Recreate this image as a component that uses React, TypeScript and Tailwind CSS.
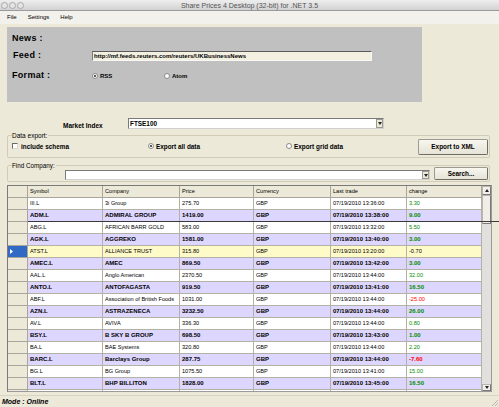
import React from 'react'

type Row = {
    sym: string
    co: string
    price: string
    time: string
    ch: string
    bold?: boolean
    sel?: boolean
}

const rows: Row[] = [
    { sym: 'III.L', co: '3i Group', price: '275.70', time: '07/19/2010 13:36:00', ch: '3.30' },
    { sym: 'ADM.L', co: 'ADMIRAL GROUP', price: '1419.00', time: '07/19/2010 13:38:00', ch: '9.00', bold: true },
    { sym: 'ABG.L', co: 'AFRICAN BARR GOLD', price: '583.00', time: '07/19/2010 13:32:00', ch: '5.50' },
    { sym: 'AGK.L', co: 'AGGREKO', price: '1581.00', time: '07/19/2010 13:40:00', ch: '3.00', bold: true },
    { sym: 'ATST.L', co: 'ALLIANCE TRUST', price: '315.80', time: '07/19/2010 13:20:00', ch: '-0.70', sel: true },
    { sym: 'AMEC.L', co: 'AMEC', price: '869.50', time: '07/19/2010 13:42:00', ch: '3.00', bold: true },
    { sym: 'AAL.L', co: 'Anglo American', price: '2370.50', time: '07/19/2010 13:44:00', ch: '32.00' },
    { sym: 'ANTO.L', co: 'ANTOFAGASTA', price: '919.50', time: '07/19/2010 13:41:00', ch: '16.50', bold: true },
    { sym: 'ABF.L', co: 'Association of British Foods', price: '1031.00', time: '07/19/2010 13:44:00', ch: '-25.00' },
    { sym: 'AZN.L', co: 'ASTRAZENECA', price: '3232.50', time: '07/19/2010 13:44:00', ch: '26.00', bold: true },
    { sym: 'AV.L', co: 'AVIVA', price: '336.30', time: '07/19/2010 13:44:00', ch: '0.80' },
    { sym: 'BSY.L', co: 'B SKY B GROUP', price: '698.50', time: '07/19/2010 13:43:00', ch: '1.00', bold: true },
    { sym: 'BA.L', co: 'BAE Systems', price: '320.80', time: '07/19/2010 13:44:00', ch: '2.20' },
    { sym: 'BARC.L', co: 'Barclays Group', price: '287.75', time: '07/19/2010 13:44:00', ch: '-7.60', bold: true },
    { sym: 'BG.L', co: 'BG Group', price: '1075.50', time: '07/19/2010 13:41:00', ch: '15.00' },
    { sym: 'BLT.L', co: 'BHP BILLITON', price: '1828.00', time: '07/19/2010 13:45:00', ch: '16.50', bold: true },
]

const cols = 'grid grid-cols-[20px_75px_77px_74px_77px_76px_75px]'

const Radio = ({ checked }: { checked?: boolean }) => (
    <span className="flex h-[6px] w-[6px] shrink-0 items-center justify-center rounded-full border border-[#8a8a8a] bg-white">
        {checked && <span className="h-[2px] w-[2px] rounded-full bg-[#222]" />}
    </span>
)

const DropButton = () => (
    <span className="flex h-full w-[7px] items-center justify-center border border-[#9c9a90] bg-[#ece9d8]">
        <svg width="4" height="3" viewBox="0 0 4 3">
            <path d="M0 0h4L2 3z" fill="#222" />
        </svg>
    </span>
)

const WinButton = ({ label, className }: { label: string; className: string }) => (
    <button
        className={`flex items-center justify-center rounded-[2px] border border-[#9c9a90] border-b-[#6f6d66] border-r-[#6f6d66] bg-gradient-to-b from-[#f7f6f0] to-[#e6e3d6] text-[6.4px] font-bold text-black ${className}`}
    >
        {label}
    </button>
)

const App: React.FC = () => {
    return (
        <div className="relative flex h-[407px] w-[499px] flex-col overflow-hidden bg-[#ece9d8] font-['Liberation_Sans',Arial,sans-serif] text-black">
            {/* Title bar */}
            <div className="flex h-[11px] shrink-0 items-center border-b border-[#9a9a9a] bg-gradient-to-b from-[#eeeeee] to-[#d2d2d2]">
                <div className="flex w-[40px] gap-[1px] pl-[1px]">
                    <span className="h-[7px] w-[7px] rounded-full border border-[#a8a8a8] bg-[#e4e4e4]" />
                    <span className="h-[7px] w-[7px] rounded-full border border-[#a8a8a8] bg-[#e4e4e4]" />
                    <span className="h-[7px] w-[7px] rounded-full border border-[#a8a8a8] bg-[#e4e4e4]" />
                </div>
                <span className="flex-1 pr-[40px] text-center text-[7px] leading-none text-[#555]">
                    Share Prices 4 Desktop (32-bit) for .NET 3.5
                </span>
            </div>

            {/* Menu */}
            <div className="flex h-[13px] shrink-0 items-center gap-[11px] bg-[#f2f1eb] pl-[7px] text-[6px]">
                <span>File</span>
                <span>Settings</span>
                <span>Help</span>
            </div>

            <div className="flex flex-1 flex-col px-[7px]">
                {/* News panel */}
                <div className="mt-[3px] flex h-[75px] w-[415px] flex-col bg-[#c0c0c0] pl-[5px] pt-[5px]">
                    <div className="flex h-[14px] items-center text-[9px] font-bold tracking-[0.3px]">News :</div>
                    <div className="mt-[3px] flex h-[14px] items-center">
                        <span className="w-[80px] pl-[1px] text-[9px] font-bold tracking-[0.3px]">Feed :</span>
                        <div className="flex h-[10px] w-[280px] items-center border border-[#f8f8f4] border-l-[#7a7a7a] border-t-[#5a5a5a] bg-[#f3f0e2] pl-[1px] text-[6px] font-bold">
                            http://mf.feeds.reuters.com/reuters/UKBusinessNews
                        </div>
                    </div>
                    <div className="mt-[6px] flex h-[14px] items-center">
                        <span className="w-[80px] text-[9px] font-bold tracking-[0.3px]">Format :</span>
                        <div className="flex w-[72px] items-center gap-[2px]">
                            <Radio checked />
                            <span className="text-[6px] font-bold">RSS</span>
                        </div>
                        <div className="flex items-center gap-[2px]">
                            <Radio />
                            <span className="text-[6px] font-bold">Atom</span>
                        </div>
                    </div>
                </div>

                {/* Market index */}
                <div className="mt-[16px] flex h-[11px]">
                    <span className="w-[121px] pl-[56px] pt-[5px] text-[6.5px] font-bold leading-none">Market Index</span>
                    <div className="flex h-[11px] w-[256px] items-center justify-between border border-[#7a7a7a] border-b-[#d0d0d0] border-r-[#d0d0d0] bg-white pl-[1px]">
                        <span className="text-[6.4px] font-bold">FTSE100</span>
                        <DropButton />
                    </div>
                </div>

                {/* Data export */}
                <div className="relative mt-[6px] flex h-[23px] w-[483px] items-center rounded-[2px] border border-[#d0ccb8]">
                    <span className="absolute left-[4px] top-[-3px] bg-[#ece9d8] pr-[1px] text-[6.5px] leading-none">Data export:</span>
                    <div className="flex w-[140px] items-center gap-[3px] pl-[4px]">
                        <span className="h-[6px] w-[6px] border border-[#6a6a6a] border-b-[#d8d8d8] border-r-[#d8d8d8] bg-white" />
                        <span className="text-[6.4px] font-bold">include schema</span>
                    </div>
                    <div className="flex w-[138px] items-center gap-[2px]">
                        <Radio checked />
                        <span className="text-[6.4px] font-bold">Export all data</span>
                    </div>
                    <div className="flex flex-1 items-center gap-[2px]">
                        <Radio />
                        <span className="text-[6.4px] font-bold">Export grid data</span>
                    </div>
                    <WinButton label="Export to XML" className="mr-[1px] h-[16px] w-[70px]" />
                </div>

                {/* Find company */}
                <div className="relative mt-[7px] flex h-[17px] w-[483px] items-end rounded-[2px] border border-[#d0ccb8] pb-[1px]">
                    <span className="absolute left-[4px] top-[-3px] bg-[#ece9d8] pr-[1px] text-[6.3px] leading-none">Find Company:</span>
                    <div className="ml-[57px] flex h-[10px] w-[365px] items-center justify-end border border-[#7a7a7a] border-b-[#d0d0d0] border-r-[#d0d0d0] bg-white">
                        <DropButton />
                    </div>
                    <WinButton label="Search..." className="ml-[4px] h-[13px] w-[54px]" />
                </div>

                {/* Grid */}
                <div className="mt-[3px] flex h-[207px] w-[485px] overflow-hidden border border-[#7a7a7a] border-b-[#9a9a9a] border-r-[#9a9a9a] bg-white">
                    <div className="flex w-[474px] flex-col overflow-hidden">
                        <div className={`${cols} h-[12px] shrink-0 text-[5.6px]`}>
                            {['', 'Symbol', 'Company', 'Price', 'Currency', 'Last trade', 'change'].map((h, i) => (
                                <div
                                    key={i}
                                    className="flex items-center border-b border-r border-[#a8a69c] bg-[#ece9d8] pl-[2px]"
                                >
                                    {h}
                                </div>
                            ))}
                        </div>
                        {rows.map((r) => {
                            const bg = r.sel ? 'bg-[#fffbc9]' : r.bold ? 'bg-[#ddd6fe]' : 'bg-white'
                            const text = r.bold ? 'text-[6px] font-bold' : 'text-[5.6px]'
                            const chColor = r.sel ? 'text-black' : r.ch.startsWith('-') ? 'text-[#ff0000]' : 'text-[#008c00]'
                            const cell = `flex items-center overflow-hidden whitespace-nowrap border-b border-r border-[#b4b1a6] pl-[2px] ${bg}`
                            return (
                                <div key={r.sym} className={`${cols} h-[12px] shrink-0 ${text}`}>
                                    <div
                                        className={`flex items-center border-b border-r border-[#a8a69c] pl-[2px] ${
                                            r.sel ? 'bg-[#316ac5]' : 'bg-[#ece9d8]'
                                        }`}
                                    >
                                        {r.sel && (
                                            <svg width="3" height="5" viewBox="0 0 3 5">
                                                <path d="M0 0l3 2.5L0 5z" fill="#fff" />
                                            </svg>
                                        )}
                                    </div>
                                    <div className={cell}>{r.sym}</div>
                                    <div className={cell}>{r.co}</div>
                                    <div className={cell}>{r.price}</div>
                                    <div className={cell}>GBP</div>
                                    <div className={cell}>{r.time}</div>
                                    <div className={`${cell} ${chColor}`}>{r.ch}</div>
                                </div>
                            )
                        })}
                        {/* next row, only its top edge shows */}
                        <div className={`${cols} h-[12px] shrink-0`}>
                            <div className="border-r border-[#a8a69c] bg-[#ece9d8]" />
                            {[0, 1, 2, 3, 4, 5].map((i) => (
                                <div key={i} className="border-r border-[#b4b1a6] bg-white" />
                            ))}
                        </div>
                    </div>

                    {/* Scrollbar */}
                    <div className="flex w-[9px] flex-col bg-[#e2e0dc]">
                        <div className="flex h-[9px] items-center justify-center border border-[#b8b6ae] border-b-[#7a7a7a] border-r-[#7a7a7a] bg-[#f2f0e8]">
                            <svg width="4" height="3" viewBox="0 0 4 3">
                                <path d="M0 3h4L2 0z" fill="#222" />
                            </svg>
                        </div>
                        <div className="h-[29px] border border-[#b8b6ae] border-b-[#7a7a7a] border-r-[#7a7a7a] bg-[#f0eee6]" />
                        <div className="flex-1" />
                        <div className="flex h-[7px] items-center justify-center border border-[#b8b6ae] border-b-[#7a7a7a] border-r-[#7a7a7a] bg-[#f2f0e8]">
                            <svg width="4" height="3" viewBox="0 0 4 3">
                                <path d="M0 0h4L2 3z" fill="#222" />
                            </svg>
                        </div>
                    </div>
                </div>
            </div>

            {/* Status bar */}
            <div className="mt-[3px] flex h-[12px] shrink-0 items-center justify-between border-t border-[#d8d4c2] pl-[2px]">
                <span className="text-[7px] font-bold italic leading-none">Mode : Online</span>
                <svg width="8" height="8" viewBox="0 0 8 8" className="self-end">
                    <path d="M7 1L1 7M7 4L4 7M7 6.5L6.5 7" stroke="#a8a8a8" strokeWidth="0.8" />
                </svg>
            </div>

            {/* stray splitter line drawn over the grid */}
            <div className="absolute left-[28px] top-[221px] h-[1px] w-[471px] bg-[#3a3a3a]" />
        </div>
    )
}

export default App
